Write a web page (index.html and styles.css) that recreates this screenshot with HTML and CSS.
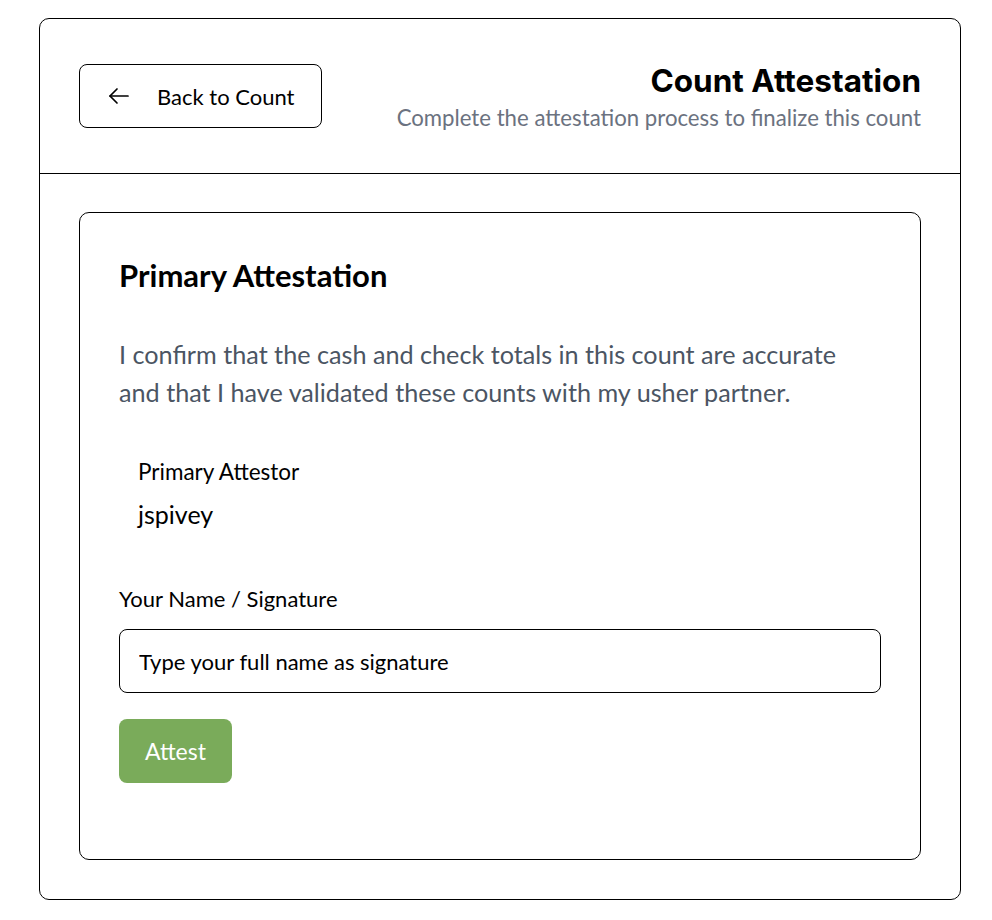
FILE: index.html
```html
<!DOCTYPE html>
<html>
<head>
<meta charset="utf-8">
<link rel="stylesheet" href="styles.css">
</head>
<body>
<div class="page">
  <div class="outer">
    <header class="header">
      <button class="back-btn">
        <svg class="arrow" width="24" height="24" viewBox="0 0 24 24" fill="none" stroke="#000" stroke-width="1.7" stroke-linecap="round" stroke-linejoin="round"><path d="M21 12H3"/><path d="M10 19l-7-7 7-7"/></svg>
        <span>Back to Count</span>
      </button>
      <div class="titles">
        <h1 class="title">Count Attestation</h1>
        <p class="subtitle">Complete the attestation process to finalize this count</p>
      </div>
    </header>
    <div class="body">
      <section class="card">
        <h2 class="card-title">Primary Attestation</h2>
        <p class="statement">I confirm that the cash and check totals in this count are accurate and that I have validated these counts with my usher partner.</p>
        <div class="attestor">
          <div class="attestor-label">Primary Attestor</div>
          <div class="attestor-name">jspivey</div>
        </div>
        <label class="field-label">Your Name / Signature</label>
        <input class="sig-input" type="text" placeholder="Type your full name as signature">
        <button class="attest-btn">Attest</button>
      </section>
    </div>
  </div>
</div>
</body>
</html>
```
FILE: styles.css
```css
* { box-sizing: border-box; }
html, body { margin: 0; padding: 0; background: #fff; }
body { font-family: Lato, "Noto Sans", sans-serif; color: #000; }
.page { padding: 18px 31px 20px 39px; }
.outer {
  border: 1px solid #000;
  border-radius: 10px;
  overflow: hidden;
}
.header {
  display: flex;
  justify-content: space-between;
  align-items: flex-start;
  padding: 45px 39px 0 39px;
  height: 155px;
  border-bottom: 1px solid #000;
}
.back-btn {
  display: flex;
  align-items: center;
  gap: 26px;
  height: 64px;
  width: 243px;
  padding: 0 0 0 27px;
  background: #fff;
  border: 1px solid #000;
  border-radius: 8px;
  font-family: Lato, sans-serif;
  font-size: 22px;
  color: #000;
}
.arrow { flex: none; }
.titles { text-align: right; }
.title {
  margin: 0;
  font-family: Inter, Roboto, sans-serif;
  font-weight: 700;
  font-size: 31.5px;
  line-height: 34px;
  margin-top: 0;
}
.subtitle {
  margin: 7px 0 0;
  font-size: 22.2px;
  line-height: 26px;
  color: #6b7280;
}
.body { padding: 38px 39px 39px 39px; }
.card {
  border: 1px solid #000;
  border-radius: 10px;
  padding: 44px 39px 76px 39px;
  display: flex;
  flex-direction: column;
  align-items: flex-start;
}
.card-title {
  margin: 0;
  font-size: 31px;
  font-weight: 700;
  line-height: 36px;
}
.statement {
  margin: 42px 0 0;
  font-size: 25.2px;
  line-height: 38px;
  color: #4b5563;
  max-width: 740px;
}
.attestor { padding: 47px 19px 0; }
.attestor-label { font-size: 22.5px; line-height: 28px; }
.attestor-name { font-size: 25px; line-height: 30px; margin-top: 13px; }
.field-label {
  margin-top: 56px;
  font-size: 22px;
  line-height: 28px;
}
.sig-input {
  margin-top: 16px;
  width: 100%;
  height: 64px;
  border: 1px solid #000;
  border-radius: 8px;
  padding: 0 19px;
  font-family: Lato, sans-serif;
  font-size: 22px;
  color: #000;
  background: #fff;
}
.sig-input::placeholder { color: #000; opacity: 1; }
.attest-btn {
  margin-top: 26px;
  height: 64px;
  width: 113px;
  border: none;
  border-radius: 8px;
  background: #7aab5a;
  color: #fff;
  font-family: Lato, sans-serif;
  font-size: 23px;
}
```
